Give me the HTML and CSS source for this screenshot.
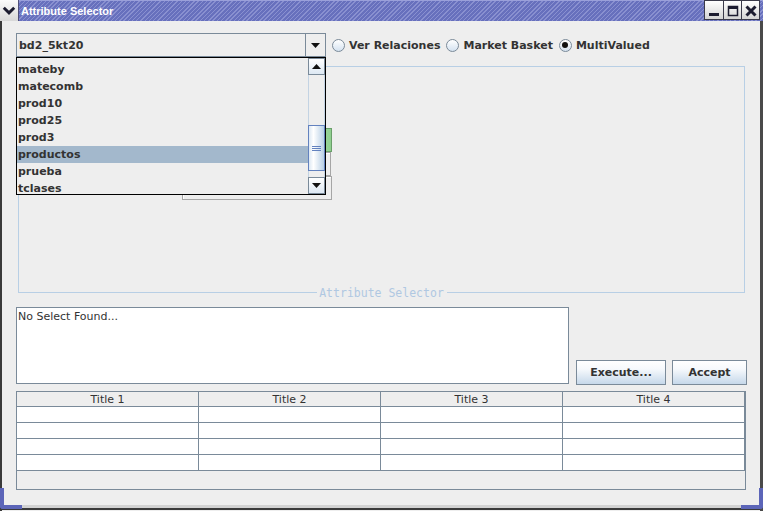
FILE: index.html
```html
<!DOCTYPE html>
<html>
<head>
<meta charset="utf-8">
<title>Attribute Selector</title>
<link rel="stylesheet" href="styles.css">
</head>
<body>
<div class="window">
  <div class="titlebar">
    <div class="menu-btn">
      <svg width="19" height="21" viewBox="0 0 19 21"><path d="M4 7.5 L9.5 13 L15 7.5" stroke="#1c1c30" stroke-width="3" fill="none"/></svg>
    </div>
    <div class="title">Attribute Selector</div>
    <div class="title-btns">
      <div class="tbtn"><svg width="16" height="17" viewBox="0 0 16 17"><rect x="3" y="11" width="10" height="3" fill="#1c1c30"/></svg></div>
      <div class="tbtn"><svg width="16" height="17" viewBox="0 0 16 17"><rect x="3.5" y="4.5" width="9" height="9" fill="none" stroke="#1c1c30" stroke-width="1.5"/><rect x="3" y="4" width="10" height="3" fill="#1c1c30"/></svg></div>
      <div class="tbtn"><svg width="16" height="17" viewBox="0 0 16 17"><path d="M3.5 4.5 L12.5 13.5 M12.5 4.5 L3.5 13.5" stroke="#1c1c30" stroke-width="3" fill="none"/></svg></div>
    </div>
  </div>

  <div class="body">
    <div class="toprow">
      <div class="combo">
        <div class="combo-text">bd2_5kt20</div>
        <div class="combo-arrow"><svg width="9" height="5" viewBox="0 0 9 5"><path d="M0 0 H9 L4.5 5 Z" fill="#111"/></svg></div>
      </div>
      <div class="radio"><span class="circle"></span>Ver Relaciones</div>
      <div class="radio"><span class="circle"></span>Market Basket</div>
      <div class="radio"><span class="circle on"></span>MultiValued</div>
    </div>

    <div class="panel">
      <div class="green"></div>
      <div class="box2"></div>
      <div class="box3"></div>
      <span class="panel-title">Attribute Selector</span>
    </div>

    <div class="midrow">
      <div class="textarea">No Select Found...</div>
      <div class="btn exec">Execute...</div>
      <div class="btn accept">Accept</div>
    </div>

    <div class="table">
      <div class="thead">
        <div>Title 1</div><div>Title 2</div><div>Title 3</div><div>Title 4</div>
      </div>
      <div class="tbody">
        <div></div><div></div><div></div><div></div>
        <div></div><div></div><div></div><div></div>
        <div></div><div></div><div></div><div></div>
        <div></div><div></div><div></div><div></div>
      </div>
    </div>
  </div>

  <div class="bottom-frame"></div>
  <div class="corner left"></div>
  <div class="corner right"></div>

  <div class="popup">
    <div class="list">
      <div class="item">mateby</div>
      <div class="item">matecomb</div>
      <div class="item">prod10</div>
      <div class="item">prod25</div>
      <div class="item">prod3</div>
      <div class="item sel">productos</div>
      <div class="item">prueba</div>
      <div class="item">tclases</div>
    </div>
    <div class="sb">
      <div class="sb-btn"><svg width="9" height="5" viewBox="0 0 9 5"><path d="M0 5 H9 L4.5 0 Z" fill="#111"/></svg></div>
      <div class="sb-track-top"></div>
      <div class="thumb"><span></span><span></span><span></span></div>
      <div class="sb-track-bot"></div>
      <div class="sb-btn"><svg width="9" height="5" viewBox="0 0 9 5"><path d="M0 0 H9 L4.5 5 Z" fill="#111"/></svg></div>
    </div>
  </div>
</div>
</body>
</html>
```

FILE: styles.css
```css
* { box-sizing: border-box; margin: 0; padding: 0; }
html, body { width: 763px; height: 511px; overflow: hidden; background: #eeeeee; }
body { font-family: "DejaVu Sans", sans-serif; font-size: 11px; color: #333333; }

.window { position: relative; width: 763px; height: 511px; display: flex; flex-direction: column; }

/* Title bar */
.titlebar {
  height: 21px; flex: none; display: flex;
  background: repeating-linear-gradient(135deg, #6770bd 0 2px, #8990d0 2px 3px);
  border-top: 1px solid #9aa0da;
}
.menu-btn { width: 19px; background: linear-gradient(#fbfbfb, #d8d8d8); border-right: 1px solid #50507a; display: flex; align-items: center; justify-content: center; margin-top: -1px; }
.title { flex: 1; color: #fff; font-family: "Liberation Sans", sans-serif; font-weight: bold; font-size: 11px; line-height: 20px; padding-left: 2px; }
.title-btns { display: flex; padding-right: 3px; }
.tbtn { width: 18px; height: 20px; margin-top: -1px; background: linear-gradient(#ffffff, #d4d4d4); border: 1px solid #3a3a4a; border-right: none; display: flex; align-items: center; justify-content: center; }
.tbtn:first-child { width: 19px; }
.tbtn:last-child { width: 19px; border-right: 1px solid #3a3a4a; }

/* Body */
.body { flex: 1; border-left: 2px solid #3a3a3a; border-right: 3px solid #4a4a4a; padding: 12px 0 0 14px; }

.toprow { display: flex; align-items: center; height: 24px; }
.combo { width: 310px; height: 24px; display: flex; border: 1px solid #7a8a99; background: #eeeeee; }
.combo-text { flex: 1; font-weight: bold; line-height: 23px; padding-left: 2px; }
.combo-arrow { width: 20px; border-left: 1px solid #7a8a99; display: flex; align-items: center; justify-content: center; background: #eeeeee; }

.radio { display: flex; align-items: center; font-weight: bold; margin-left: 6px; }
.circle { width: 13px; height: 13px; border-radius: 50%; border: 1px solid #7a8a99; background: linear-gradient(#ffffff, #d4e2f0); margin-right: 4px; display: flex; align-items: center; justify-content: center; }
.circle.on::after { content: ""; width: 6px; height: 6px; border-radius: 50%; background: #111; }

/* Titled panel */
.panel { position: relative; margin: 9px 0 0 2px; width: 727px; height: 227px; border: 1px solid #b8cfe5; padding-top: 61px; }
.green { margin-left: 281px; width: 32px; height: 24px; background: linear-gradient(90deg, #b8e6b8, #8fcf8f); border: 1px solid #6a9f6a; }
.box2 { margin-left: 286px; width: 26px; height: 24px; border: 1px solid #a6a6a6; box-shadow: inset 1px 1px #ffffff; }
.box3 { margin-left: 163px; width: 150px; height: 24px; border: 1px solid #a6a6a6; box-shadow: inset 1px 1px #ffffff; }
.panel-title {
  position: absolute; left: 0; right: 0; bottom: -7px; margin: 0 auto; width: 130px; text-align: center;
  background: #eeeeee; color: #b0c8e2; font-family: "DejaVu Sans Mono", monospace; font-size: 11.5px; line-height: 12px;
}

/* text area + buttons */
.midrow { display: flex; align-items: flex-end; margin-top: 14px; }
.textarea { width: 553px; height: 77px; background: #fff; border: 1px solid #7a8a99; padding: 2px 0 0 1px; line-height: 13px; margin-bottom: 1px; }
.btn { height: 25px; border: 1px solid #7a8a99; background: linear-gradient(#ffffff, #f6f9fc 35%, #c6d8ea); font-weight: bold; display: flex; align-items: center; justify-content: center; }
.exec { width: 90px; margin-left: 7px; }
.accept { width: 75px; margin-left: 6px; }

/* table */
.table { margin-top: 6px; width: 730px; height: 99px; border: 1px solid #7a8a99; background: #eeeeee; }
.thead, .tbody { display: grid; grid-template-columns: repeat(4, 182px); }
.thead div { height: 15px; line-height: 15px; text-align: center; border-right: 1px solid #7a8a99; border-bottom: 1px solid #7a8a99; background: #eeeeee; }
.tbody div { height: 16px; background: #fff; border-right: 1px solid #7a8a99; border-bottom: 1px solid #7a8a99; }

/* frame bottom */
.bottom-frame { height: 7px; flex: none; background: linear-gradient(#eeeeee 0 1px, #d2d2d2 1px 4px, #3a3a3a 4px 6px, #eeeeee 6px); border-left: 2px solid #3a3a3a; border-right: 3px solid #4a4a4a; }
.corner { position: absolute; bottom: 2px; width: 22px; height: 21px; border-bottom: 4px solid #5c65b8; }
.corner.left { left: 0; border-left: 4px solid #5c65b8; border-bottom-left-radius: 3px; }
.corner.right { right: 0; border-right: 4px solid #5c65b8; border-bottom-right-radius: 3px; }

/* popup list */
.popup { position: absolute; left: 16px; top: 57px; width: 310px; height: 138px; border: 1px solid #000; background: #eeeeee; display: flex; }
.list { flex: 1; overflow: hidden; padding-top: 3px; }
.item { height: 17px; line-height: 17px; font-weight: bold; padding-left: 1px; white-space: nowrap; }
.item.sel { background: #a3b8cc; }
.sb { width: 17px; display: flex; flex-direction: column; background: #eeeeee; border-left: 1px solid #c3d3e3; border-right: 1px solid #c3d3e3; }
.sb-btn { height: 17px; flex: none; border: 1px solid #7a8a99; background: linear-gradient(#ffffff, #dde8f3); display: flex; align-items: center; justify-content: center; margin: 0 -1px; }
.sb-track-top { height: 50px; flex: none; }
.thumb { height: 46px; flex: none; margin: 0 -1px; border: 1px solid #6382bf; background: linear-gradient(90deg, #dde8f3, #ffffff 30%, #b8cfe5); display: flex; flex-direction: column; align-items: center; justify-content: center; gap: 1px; }
.thumb span { width: 9px; height: 1px; background: #6382bf; }
.sb-track-bot { flex: 1; }
```
